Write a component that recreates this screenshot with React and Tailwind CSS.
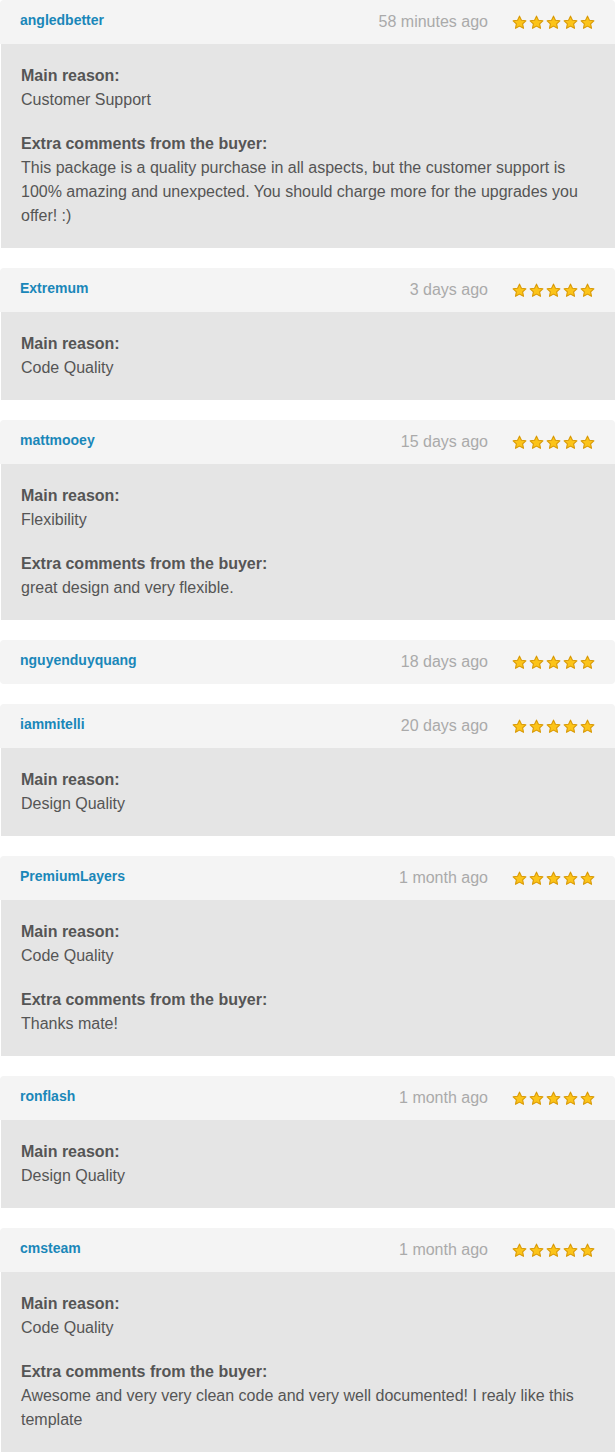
import React from 'react';

const reviews = [
  {
    user: 'angledbetter',
    when: '58 minutes ago',
    reason: 'Customer Support',
    comment:
      'This package is a quality purchase in all aspects, but the customer support is 100% amazing and unexpected. You should charge more for the upgrades you offer! :)',
  },
  { user: 'Extremum', when: '3 days ago', reason: 'Code Quality' },
  {
    user: 'mattmooey',
    when: '15 days ago',
    reason: 'Flexibility',
    comment: 'great design and very flexible.',
  },
  { user: 'nguyenduyquang', when: '18 days ago' },
  { user: 'iammitelli', when: '20 days ago', reason: 'Design Quality' },
  {
    user: 'PremiumLayers',
    when: '1 month ago',
    reason: 'Code Quality',
    comment: 'Thanks mate!',
  },
  { user: 'ronflash', when: '1 month ago', reason: 'Design Quality' },
  {
    user: 'cmsteam',
    when: '1 month ago',
    reason: 'Code Quality',
    comment:
      'Awesome and very very clean code and very well documented! I realy like this template',
  },
];

function Star() {
  return (
    <svg width="15" height="15" viewBox="0 0 24 24">
      <path
        d="M12 1.8l3.1 6.6 7.1.9-5.2 4.9 1.4 7.1L12 17.8l-6.4 3.5 1.4-7.1-5.2-4.9 7.1-.9z"
        fill="#fcc419"
        stroke="#d99a06"
        strokeWidth="1.8"
        strokeLinejoin="round"
      />
    </svg>
  );
}

function Review({ r }) {
  const hasBody = !!r.reason;
  return (
    <div className="mb-[20px]">
      <div
        className={
          'flex items-center h-[44px] bg-[#f4f4f4] pl-[20px] pr-[20px] ' +
          (hasBody ? 'rounded-t-[4px]' : 'rounded-[4px]')
        }
      >
        <span className="text-[14px] font-bold text-[#1a87b9] -mt-[3px]">{r.user}</span>
        <span className="ml-auto text-[16px] text-[#aaaaaa] mr-[24px]">{r.when}</span>
        <div className="flex gap-[2px]">
          {[0, 1, 2, 3, 4].map((i) => (
            <Star key={i} />
          ))}
        </div>
      </div>
      {hasBody && (
        <div className="ml-px bg-[#e5e5e5] px-[20px] py-[20px] text-[16px] leading-[24px] text-[#555555]">
          <div className="font-bold">Main reason:</div>
          <div>{r.reason}</div>
          {r.comment && (
            <>
              <div className="font-bold mt-[20px]">Extra comments from the buyer:</div>
              <div>{r.comment}</div>
            </>
          )}
        </div>
      )}
    </div>
  );
}

export default function App() {
  return (
    <div className="w-[615px] bg-white" style={{ fontFamily: '"Liberation Sans", Arial, sans-serif' }}>
      {reviews.map((r) => (
        <Review key={r.user} r={r} />
      ))}
    </div>
  );
}
